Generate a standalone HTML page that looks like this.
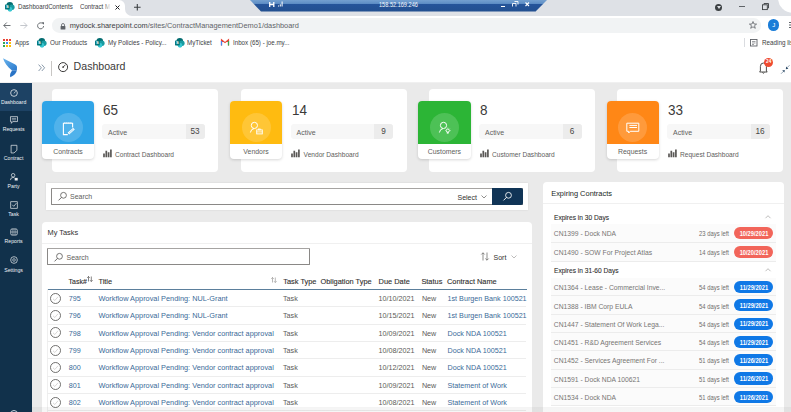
<!DOCTYPE html>
<html><head><meta charset="utf-8">
<style>
*{margin:0;padding:0;box-sizing:border-box}
html,body{width:791px;height:412px;overflow:hidden;background:#fff;font-family:"Liberation Sans",sans-serif;color:#323130}
.a{position:absolute}
.t{position:absolute;white-space:nowrap;line-height:1}
svg{position:absolute;overflow:visible}
</style></head><body>
<!-- tab strip -->
<div class="a" style="left:0;top:0;width:791px;height:15.6px;background:#dee1e6"></div>
<div class="a" style="left:0;top:0;width:125px;height:15.6px;background:#fff;border-top-right-radius:6px"></div>
<div class="a" style="left:125px;top:8px;width:8px;height:8px;background:#fff"></div>
<div class="a" style="left:125px;top:0;width:10px;height:15.6px;background:#dee1e6;border-bottom-left-radius:7px"></div>
<svg style="left:5px;top:1.5px" width="10" height="10"><circle cx="4.8" cy="3.3" r="3.3" fill="#036c70"/><circle cx="6.8" cy="5.3" r="2.8" fill="#1a9ba1"/><circle cx="5" cy="7.3" r="2.4" fill="#37c6d0"/><rect x="0" y="2.6" width="4.8" height="4.8" rx="0.6" fill="#03787c"/><text x="2.4" y="6.4" font-size="4" fill="#fff" text-anchor="middle" font-family="Liberation Sans" font-weight="bold">S</text></svg>
<div class="t" style="left:18px;top:2.8px;font-size:7px;color:#3c4043;transform:scaleX(0.88);transform-origin:0 0">DashboardContents</div><div class="t" style="left:79.6px;top:2.8px;font-size:7px;color:#3c4043;transform:scaleX(0.88);transform-origin:0 0">Contract M</div>
<div class="a" style="left:103px;top:1px;width:9px;height:11px;background:linear-gradient(90deg,rgba(255,255,255,0),#fff 90%)"></div>
<svg style="left:115px;top:5px" width="5" height="5"><path d="M0.5,0.5 L4.5,4.5 M4.5,0.5 L0.5,4.5" stroke="#202124" stroke-width="1"/></svg>
<svg style="left:133.5px;top:4px" width="7" height="7"><path d="M3.3,0 V6.6 M0,3.3 H6.6" stroke="#3c4043" stroke-width="1.1"/></svg>
<!-- remote desktop bar -->
<svg style="left:0;top:0" width="791" height="16"><defs><linearGradient id="rg" x1="0" y1="0" x2="0" y2="1"><stop offset="0" stop-color="#74a0d0"/><stop offset="0.3" stop-color="#5f8fc6"/><stop offset="0.36" stop-color="#25549a"/><stop offset="1" stop-color="#225090"/></linearGradient></defs>
<polygon points="250,0 547,0 535.6,11.6 261,11.6" fill="url(#rg)"/></svg>
<svg style="left:268.5px;top:2px" width="6" height="6"><path d="M0.7,0 V5 M4.8,0 V5 M0.7,2.5 H4.8" stroke="#fff" stroke-width="1.3"/></svg>
<svg style="left:278px;top:1px" width="6" height="6"><path d="M0.5,5.5 V4.5 M2.3,5.5 V3.3 M4.1,5.5 V0.5" stroke="#fff" stroke-width="1"/></svg>
<div class="t" style="left:378.7px;top:1.8px;font-size:6.5px;color:#f4f7fc;transform:scaleX(0.86);transform-origin:0 0">158.52.169.246</div>
<div class="a" style="left:500.5px;top:6px;width:4px;height:1px;background:#fff"></div>
<svg style="left:511.5px;top:1px" width="7" height="6"><path d="M2.5,0.5 H6 V3.5 M0.5,2.5 H4 V5.5 M0.5,2.5 V5.5" fill="none" stroke="#fff" stroke-width="0.9"/></svg>
<svg style="left:524.5px;top:2.2px" width="5" height="5"><path d="M0.5,0.5 L4,4 M4,0.5 L0.5,4" stroke="#fff" stroke-width="1.1"/></svg>
<!-- window controls -->
<div class="a" style="left:715px;top:3.5px;width:7px;height:7px;border-radius:50%;background:#3c4043"></div>
<svg style="left:716.5px;top:5.5px" width="4" height="4"><path d="M0,0 H4 L2,3 Z" fill="#dee1e6"/></svg>
<div class="a" style="left:739px;top:5.5px;width:6px;height:0.8px;background:#5f6368"></div>
<svg style="left:762px;top:3px" width="8" height="7"><path d="M2,1.5 V0.5 H6.5 V5 H5.5" fill="none" stroke="#3c4043" stroke-width="0.9"/><rect x="0.5" y="1.8" width="4.8" height="4.8" fill="none" stroke="#3c4043" stroke-width="0.9"/></svg>
<div class="a" style="left:777.5px;top:-17px;width:30px;height:30px;border-radius:50%;background:#fff"></div>
<!-- toolbar -->
<div class="a" style="left:52px;top:18.2px;width:709.4px;height:14.6px;border-radius:7.3px;background:#f1f3f4"></div>
<svg style="left:3px;top:22px" width="8" height="7"><path d="M7.5,3.5 H0.8 M3.8,0.5 L0.8,3.5 L3.8,6.5" fill="none" stroke="#5f6368" stroke-width="0.9"/></svg>
<svg style="left:20px;top:22px" width="8" height="7"><path d="M0.3,3.5 H7 M4,0.5 L7,3.5 L4,6.5" fill="none" stroke="#bdc1c6" stroke-width="0.9"/></svg>
<svg style="left:37px;top:22px" width="8" height="8"><path d="M6.6,4 A3,3 0 1 1 5.6,1.6" fill="none" stroke="#5f6368" stroke-width="0.9"/><path d="M4.5,0.2 H7 V2.7 Z" fill="#5f6368"/></svg>
<svg style="left:59.5px;top:22.5px" width="6" height="7"><path d="M1.5,3 V2 Q1.5,0.5 3,0.5 Q4.5,0.5 4.5,2 V3" fill="none" stroke="#5f6368" stroke-width="0.8"/><rect x="0.6" y="3" width="4.8" height="3.4" rx="0.5" fill="#5f6368"/></svg>
<div class="t" style="left:69.7px;top:21.8px;font-size:7.4px;color:#3c4043">mydock.sharepoint.com<span style="color:#5f6368">/sites/ContractManagementDemo1/dashboard</span></div>
<svg style="left:748.5px;top:21px" width="8" height="8"><path d="M4,0.5 L5,3 L7.6,3.1 L5.5,4.7 L6.3,7.3 L4,5.8 L1.7,7.3 L2.5,4.7 L0.4,3.1 L3,3 Z" fill="none" stroke="#5f6368" stroke-width="0.8"/></svg>
<div class="a" style="left:768px;top:19.2px;width:11.4px;height:11.4px;border-radius:50%;background:#1a7dd8"></div>
<div class="t" style="left:772.2px;top:22px;font-size:6px;color:#fff">J</div>
<div class="a" style="left:789px;top:21.5px;width:1.6px;height:1.6px;background:#5f6368;box-shadow:0 2.5px 0 #5f6368,0 5px 0 #5f6368"></div>
<!-- bookmarks -->
<svg style="left:3px;top:38.5px" width="8" height="8">
<rect x="0" y="0" width="2" height="2" fill="#ea4335"/><rect x="3" y="0" width="2" height="2" fill="#ea4335"/><rect x="6" y="0" width="2" height="2" fill="#ea4335"/>
<rect x="0" y="3" width="2" height="2" fill="#34a853"/><rect x="3" y="3" width="2" height="2" fill="#4285f4"/><rect x="6" y="3" width="2" height="2" fill="#fbbc05"/>
<rect x="0" y="6" width="2" height="2" fill="#34a853"/><rect x="3" y="6" width="2" height="2" fill="#fbbc05"/><rect x="6" y="6" width="2" height="2" fill="#fbbc05"/></svg>
<div class="t" style="left:15px;top:39.4px;font-size:7px;color:#3c4043;transform:scaleX(0.886);transform-origin:0 0">Apps</div>
<svg style="left:37px;top:37.5px" width="10" height="10"><circle cx="4.8" cy="3.3" r="3.3" fill="#036c70"/><circle cx="6.8" cy="5.3" r="2.8" fill="#1a9ba1"/><circle cx="5" cy="7.3" r="2.4" fill="#37c6d0"/><rect x="0" y="2.6" width="4.8" height="4.8" rx="0.6" fill="#03787c"/><text x="2.4" y="6.4" font-size="4" fill="#fff" text-anchor="middle" font-family="Liberation Sans" font-weight="bold">S</text></svg>
<div class="t" style="left:50px;top:39.4px;font-size:7px;color:#3c4043;transform:scaleX(0.900);transform-origin:0 0">Our Products</div>
<svg style="left:95px;top:37.5px" width="10" height="10"><circle cx="4.8" cy="3.3" r="3.3" fill="#036c70"/><circle cx="6.8" cy="5.3" r="2.8" fill="#1a9ba1"/><circle cx="5" cy="7.3" r="2.4" fill="#37c6d0"/><rect x="0" y="2.6" width="4.8" height="4.8" rx="0.6" fill="#03787c"/><text x="2.4" y="6.4" font-size="4" fill="#fff" text-anchor="middle" font-family="Liberation Sans" font-weight="bold">S</text></svg>
<div class="t" style="left:108px;top:39.4px;font-size:7px;color:#3c4043;transform:scaleX(0.893);transform-origin:0 0">My Policies - Policy...</div>
<svg style="left:175px;top:37.5px" width="10" height="10"><circle cx="4.8" cy="3.3" r="3.3" fill="#036c70"/><circle cx="6.8" cy="5.3" r="2.8" fill="#1a9ba1"/><circle cx="5" cy="7.3" r="2.4" fill="#37c6d0"/><rect x="0" y="2.6" width="4.8" height="4.8" rx="0.6" fill="#03787c"/><text x="2.4" y="6.4" font-size="4" fill="#fff" text-anchor="middle" font-family="Liberation Sans" font-weight="bold">S</text></svg>
<div class="t" style="left:187px;top:39.4px;font-size:7px;color:#3c4043;transform:scaleX(0.893);transform-origin:0 0">MyTicket</div>
<svg style="left:220.5px;top:39px" width="8" height="7"><path d="M0.5,6.5 V0.8 L4,3.6 L7.5,0.8 V6.5" fill="none" stroke="#ea4335" stroke-width="1.2"/><path d="M0.5,6.5 V2" stroke="#4285f4" stroke-width="1.2"/><path d="M7.5,6.5 V2" stroke="#34a853" stroke-width="1.2"/></svg>
<div class="t" style="left:232.8px;top:39.4px;font-size:7px;color:#3c4043;transform:scaleX(0.886);transform-origin:0 0">Inbox (65) - joe.my...</div>
<div class="a" style="left:743.5px;top:38px;width:0.8px;height:9px;background:#dadce0"></div>
<svg style="left:750px;top:39px" width="8" height="8"><rect x="0.5" y="0.5" width="6.5" height="6.5" fill="none" stroke="#5f6368" stroke-width="0.9"/><path d="M2,2.5 H5.5 M2,4 H5.5 M2,5.5 H4" stroke="#5f6368" stroke-width="0.6"/></svg>
<div class="t" style="left:762px;top:39.4px;font-size:7px;color:#3c4043;transform:scaleX(0.900);transform-origin:0 0">Reading list</div>

<!-- app header -->
<svg style="left:0;top:0" width="20" height="80"><defs><linearGradient id="lg1" x1="0" y1="0" x2="1" y2="1"><stop offset="0" stop-color="#6ab4ec"/><stop offset="1" stop-color="#2a78cc"/></linearGradient></defs>
<path d="M3,58.2 C4.5,62.5 7,66.5 12,70.6 L16.9,70.2 L17,66.8 Q16.6,65 14.8,64.2 Z" fill="url(#lg1)"/>
<path d="M12,70.6 L16.9,70.2 Q16.2,74.5 10.3,77.2 Q9.3,74.5 12,70.6 Z" fill="#2a74c6"/></svg>
<svg style="left:38px;top:64px" width="8" height="8"><path d="M0.6,0.6 L3.4,3.8 L0.6,7 M3.8,0.6 L6.6,3.8 L3.8,7" fill="none" stroke="#6b7f94" stroke-width="0.8"/></svg>
<div class="a" style="left:51.2px;top:61px;width:0.9px;height:14.5px;background:#c8c6c4"></div>
<svg style="left:58px;top:61.8px" width="11" height="11"><circle cx="5.1" cy="5.1" r="4.5" fill="none" stroke="#3b3a39" stroke-width="1"/><path d="M5.1,5.1 L7.6,2.6" stroke="#3b3a39" stroke-width="0.9"/><circle cx="5.1" cy="5.1" r="0.9" fill="#3b3a39"/></svg>
<div class="t" style="left:73.6px;top:61.2px;font-size:10.6px;color:#3b3a39">Dashboard</div>
<svg style="left:759px;top:62px" width="10" height="12"><path d="M0.6,10 L1.4,9 L1.4,4.5 Q1.4,1 4.4,1 Q7.4,1 7.4,4.5 L7.4,9 L8.2,10 Z" fill="none" stroke="#3b3a39" stroke-width="0.9"/><path d="M3.4,10.5 Q4.4,12 5.4,10.5" stroke="#3b3a39" stroke-width="0.9" fill="none"/></svg>
<div class="a" style="left:764.4px;top:57.9px;width:9px;height:9px;border-radius:50%;background:#ef4b30"></div>
<div class="t" style="left:766.1px;top:60.3px;font-size:4.6px;color:#fff;font-weight:bold">24</div>
<svg style="left:781px;top:65px" width="9" height="9"><path d="M8.6,0.2 L6.3,2.5 M0,8.8 L2.3,6.5" stroke="#6a8299" stroke-width="0.7" fill="none"/><path d="M4.8,4.2 L5.2,1.6 L7.4,3.8 Z M3.8,5 L1.2,5.4 L3.4,7.6 Z" fill="#2d4a66"/></svg>
<div class="a" style="left:0;top:83px;width:32px;height:329px;background:#11314b"></div>
<div class="a" style="left:0;top:83px;width:32px;height:28px;background:#1d4264"></div>
<div class="a" style="left:32px;top:83px;width:759px;height:329px;background:#eaeaea"></div>
<div class="a" style="left:0;top:82px;width:791px;height:1px;background:rgba(0,0,0,0.06)"></div>
<svg style="left:13.5px;top:92.5px" width="1" height="1" opacity="0.92"><g transform="scale(0.88)"><circle cx="0" cy="0" r="3.8" fill="none" stroke="#fff" stroke-width="0.9"/><path d="M0,0.5 L1.8,-2" stroke="#fff" stroke-width="0.8"/></g></svg><div class="t" style="left:13.6px;top:99.6px;font-size:5.2px;color:#eef2f6;transform:translateX(-50%)">Dashboard</div><svg style="left:13.5px;top:120.3px" width="1" height="1" opacity="0.92"><g transform="scale(0.88)"><path d="M-4,-3.8 H4 V1.8 H-1.5 L-3,3.8 V1.8 H-4 Z" fill="none" stroke="#fff" stroke-width="0.8"/><path d="M-2.5,-1.8 H2.5 M-2.5,-0.2 H2.5" stroke="#fff" stroke-width="0.6"/></g></svg><div class="t" style="left:13.6px;top:127.39999999999999px;font-size:5.2px;color:#eef2f6;transform:translateX(-50%)">Requests</div><svg style="left:13.5px;top:148.7px" width="1" height="1" opacity="0.92"><g transform="scale(0.88)"><path d="M-3.3,-4.2 H3.3 V1.5 L0,4.5 H-3.3 Z" fill="none" stroke="#fff" stroke-width="0.8"/></g></svg><div class="t" style="left:13.6px;top:155.79999999999998px;font-size:5.2px;color:#eef2f6;transform:translateX(-50%)">Contract</div><svg style="left:13.5px;top:176.6px" width="1" height="1" opacity="0.92"><g transform="scale(0.88)"><circle cx="-1" cy="-2" r="2" fill="none" stroke="#fff" stroke-width="0.8"/><path d="M-4,3.5 Q-4,0.5 -1,0.5 Q0.5,0.5 1,1.5" fill="none" stroke="#fff" stroke-width="0.8"/><rect x="0.8" y="1" width="3.4" height="3" fill="#fff"/></g></svg><div class="t" style="left:13.6px;top:183.7px;font-size:5.2px;color:#eef2f6;transform:translateX(-50%)">Party</div><svg style="left:13.5px;top:204.6px" width="1" height="1" opacity="0.92"><g transform="scale(0.88)"><rect x="-3.7" y="-3.7" width="7.4" height="7.4" fill="none" stroke="#fff" stroke-width="0.8"/><path d="M-2,-0.3 L-0.3,1.5 L2.8,-2.2" fill="none" stroke="#fff" stroke-width="0.8"/></g></svg><div class="t" style="left:13.6px;top:211.7px;font-size:5.2px;color:#eef2f6;transform:translateX(-50%)">Task</div><svg style="left:13.5px;top:232.3px" width="1" height="1" opacity="0.92"><g transform="scale(0.88)"><rect x="-3.7" y="-3.5" width="7.4" height="7" rx="1.5" fill="none" stroke="#fff" stroke-width="0.8"/><path d="M-1.2,-3.5 V3.5 M1.2,-3.5 V3.5 M-3.7,0 H3.7" stroke="#fff" stroke-width="0.6"/></g></svg><div class="t" style="left:13.6px;top:239.4px;font-size:5.2px;color:#eef2f6;transform:translateX(-50%)">Reports</div><svg style="left:13.5px;top:260.4px" width="1" height="1" opacity="0.92"><g transform="scale(0.88)"><circle cx="0" cy="0" r="3.8" fill="none" stroke="#fff" stroke-width="0.8"/><circle cx="0" cy="0" r="1.5" fill="none" stroke="#fff" stroke-width="0.7"/></g></svg><div class="t" style="left:13.6px;top:267.5px;font-size:5.2px;color:#eef2f6;transform:translateX(-50%)">Settings</div><div class="a" style="left:9.5px;top:409.5px;width:8px;height:8px;border-radius:50%;border:0.8px solid #c9d3de"></div><div class="a" style="left:52px;top:88.7px;width:166.4px;height:83px;background:#fff;border-radius:4px"></div>
<div class="a" style="left:42px;top:100.6px;width:52.3px;height:58.3px;background:#fff;border-radius:4px;box-shadow:0 1px 3px rgba(0,0,0,0.16);overflow:hidden">
 <div class="a" style="left:0;top:0;width:52.3px;height:43.2px;background:#2fa4e7"></div>
 <div class="a" style="left:11.6px;top:12.6px;width:29px;height:29px;border-radius:50%;background:rgba(255,255,255,0.16)"></div>
 <div class="t" style="left:26px;top:48.8px;font-size:6.9px;color:#605e5c;transform:translateX(-50%)">Contracts</div>
</div>
<svg style="left:68.2px;top:127.6px" width="1" height="1"><path d="M4.6,-0.6 V-4.8 H-4.6 V6.6 H-0.2" fill="none" stroke="#fff" stroke-width="1.1"/><path d="M-3.1,-6 V-4.5 M-1.1,-6 V-4.5 M0.9,-6 V-4.5 M2.9,-6 V-4.5" stroke="#fff" stroke-width="0.8"/><path d="M0.4,5.6 L6,0.6" stroke="#fff" stroke-width="2.3"/><path d="M1.2,5 L5.4,1.2" stroke="#5ab5ea" stroke-width="0.6"/></svg>
<div class="t" style="left:103px;top:102.2px;font-size:15px;color:#3b3a39;transform:scaleX(0.9);transform-origin:0 0">65</div>
<div class="a" style="left:102px;top:124px;width:102.5px;height:15px;background:#f7f7f7;border-radius:3px"></div>
<div class="a" style="left:185.5px;top:124px;width:19px;height:15px;background:#ececec;border-radius:0 3px 3px 0"></div>
<div class="t" style="left:108px;top:128.6px;font-size:7px;color:#605e5c">Active</div>
<div class="t" style="left:195px;top:128.1px;font-size:8.2px;color:#484644;transform:translateX(-50%)">53</div>
<svg style="left:102.8px;top:149px" width="10" height="9"><path d="M1,8.3 V4.5 M3.3,8.3 V1.8 M5.6,8.3 V3.2 M7.9,8.3 V0.5" stroke="#5a5856" stroke-width="1.7"/></svg>
<div class="t" style="left:115px;top:151.6px;font-size:6.6px;color:#605e5c">Contract Dashboard</div>
<div class="a" style="left:240.6px;top:88.7px;width:166.4px;height:83px;background:#fff;border-radius:4px"></div>
<div class="a" style="left:230px;top:100.6px;width:52.3px;height:58.3px;background:#fff;border-radius:4px;box-shadow:0 1px 3px rgba(0,0,0,0.16);overflow:hidden">
 <div class="a" style="left:0;top:0;width:52.3px;height:43.2px;background:#ffbb10"></div>
 <div class="a" style="left:11.6px;top:12.6px;width:29px;height:29px;border-radius:50%;background:rgba(255,255,255,0.16)"></div>
 <div class="t" style="left:26px;top:48.8px;font-size:6.9px;color:#605e5c;transform:translateX(-50%)">Vendors</div>
</div>
<svg style="left:256.2px;top:127.6px" width="1" height="1"><circle cx="-1.6" cy="-2.6" r="3.1" fill="none" stroke="#fff" stroke-width="1"/><path d="M-5.6,4.5 Q-5,0.9 -2,0.6" fill="none" stroke="#fff" stroke-width="1"/><rect x="0.7" y="1.9" width="5.6" height="4" fill="none" stroke="#fff" stroke-width="0.9"/><path d="M0.7,3.9 H6.3" stroke="#fff" stroke-width="0.8"/><rect x="2.6" y="0.9" width="1.8" height="1" fill="none" stroke="#fff" stroke-width="0.6"/></svg>
<div class="t" style="left:291.6px;top:102.2px;font-size:15px;color:#3b3a39;transform:scaleX(0.9);transform-origin:0 0">14</div>
<div class="a" style="left:290.6px;top:124px;width:102.5px;height:15px;background:#f7f7f7;border-radius:3px"></div>
<div class="a" style="left:374.1px;top:124px;width:19px;height:15px;background:#ececec;border-radius:0 3px 3px 0"></div>
<div class="t" style="left:296.6px;top:128.6px;font-size:7px;color:#605e5c">Active</div>
<div class="t" style="left:383.6px;top:128.1px;font-size:8.2px;color:#484644;transform:translateX(-50%)">9</div>
<svg style="left:291.4px;top:149px" width="10" height="9"><path d="M1,8.3 V4.5 M3.3,8.3 V1.8 M5.6,8.3 V3.2 M7.9,8.3 V0.5" stroke="#5a5856" stroke-width="1.7"/></svg>
<div class="t" style="left:303.6px;top:151.6px;font-size:6.6px;color:#605e5c">Vendor Dashboard</div>
<div class="a" style="left:429px;top:88.7px;width:166.4px;height:83px;background:#fff;border-radius:4px"></div>
<div class="a" style="left:418.4px;top:100.6px;width:52.3px;height:58.3px;background:#fff;border-radius:4px;box-shadow:0 1px 3px rgba(0,0,0,0.16);overflow:hidden">
 <div class="a" style="left:0;top:0;width:52.3px;height:43.2px;background:#2cb536"></div>
 <div class="a" style="left:11.6px;top:12.6px;width:29px;height:29px;border-radius:50%;background:rgba(255,255,255,0.16)"></div>
 <div class="t" style="left:26px;top:48.8px;font-size:6.9px;color:#605e5c;transform:translateX(-50%)">Customers</div>
</div>
<svg style="left:444.59999999999997px;top:127.6px" width="1" height="1"><circle cx="-1.5" cy="-2.6" r="3.1" fill="none" stroke="#fff" stroke-width="1"/><path d="M-5.6,4.5 Q-5,0.9 -2,0.6" fill="none" stroke="#fff" stroke-width="1"/><circle cx="2.8" cy="2.6" r="1.6" fill="none" stroke="#fff" stroke-width="0.9"/><rect x="2.1" y="4.2" width="1.4" height="1.4" fill="none" stroke="#fff" stroke-width="0.6"/><path d="M2.8,-0.4 V0.4 M0,2.6 H0.6 M5,2.6 H5.7 M0.9,0.7 L1.4,1.2 M4.7,0.7 L4.2,1.2" stroke="#fff" stroke-width="0.6"/></svg>
<div class="t" style="left:480px;top:102.2px;font-size:15px;color:#3b3a39;transform:scaleX(0.9);transform-origin:0 0">8</div>
<div class="a" style="left:479px;top:124px;width:102.5px;height:15px;background:#f7f7f7;border-radius:3px"></div>
<div class="a" style="left:562.5px;top:124px;width:19px;height:15px;background:#ececec;border-radius:0 3px 3px 0"></div>
<div class="t" style="left:485px;top:128.6px;font-size:7px;color:#605e5c">Active</div>
<div class="t" style="left:572px;top:128.1px;font-size:8.2px;color:#484644;transform:translateX(-50%)">6</div>
<svg style="left:479.8px;top:149px" width="10" height="9"><path d="M1,8.3 V4.5 M3.3,8.3 V1.8 M5.6,8.3 V3.2 M7.9,8.3 V0.5" stroke="#5a5856" stroke-width="1.7"/></svg>
<div class="t" style="left:492px;top:151.6px;font-size:6.6px;color:#605e5c">Customer Dashboard</div>
<div class="a" style="left:617px;top:88.7px;width:166.4px;height:83px;background:#fff;border-radius:4px"></div>
<div class="a" style="left:606.6px;top:100.6px;width:52.3px;height:58.3px;background:#fff;border-radius:4px;box-shadow:0 1px 3px rgba(0,0,0,0.16);overflow:hidden">
 <div class="a" style="left:0;top:0;width:52.3px;height:43.2px;background:#ff8716"></div>
 <div class="a" style="left:11.6px;top:12.6px;width:29px;height:29px;border-radius:50%;background:rgba(255,255,255,0.16)"></div>
 <div class="t" style="left:26px;top:48.8px;font-size:6.9px;color:#605e5c;transform:translateX(-50%)">Requests</div>
</div>
<svg style="left:632.8000000000001px;top:127.6px" width="1" height="1"><path d="M-6.2,-4.8 H5.8 V3.3 H-2.8 L-4.3,5 V3.3 H-6.2 Z" fill="none" stroke="#fff" stroke-width="1"/><path d="M-3.6,-2.6 H4 M-3.6,-0.5 H4" stroke="#fff" stroke-width="1"/></svg>
<div class="t" style="left:668px;top:102.2px;font-size:15px;color:#3b3a39;transform:scaleX(0.9);transform-origin:0 0">33</div>
<div class="a" style="left:667px;top:124px;width:102.5px;height:15px;background:#f7f7f7;border-radius:3px"></div>
<div class="a" style="left:750.5px;top:124px;width:19px;height:15px;background:#ececec;border-radius:0 3px 3px 0"></div>
<div class="t" style="left:673px;top:128.6px;font-size:7px;color:#605e5c">Active</div>
<div class="t" style="left:760px;top:128.1px;font-size:8.2px;color:#484644;transform:translateX(-50%)">16</div>
<svg style="left:667.8px;top:149px" width="10" height="9"><path d="M1,8.3 V4.5 M3.3,8.3 V1.8 M5.6,8.3 V3.2 M7.9,8.3 V0.5" stroke="#5a5856" stroke-width="1.7"/></svg>
<div class="t" style="left:680px;top:151.6px;font-size:6.6px;color:#605e5c">Request Dashboard</div>
<div class="a" style="left:46px;top:182.7px;width:481.5px;height:27px;background:#fff;box-shadow:0 0 2px rgba(0,0,0,0.1)"></div>
<div class="a" style="left:50.9px;top:188.1px;width:471.7px;height:16.7px;border:1px solid #8a8886;border-top-color:#a6a4a2;border-radius:1px;background:#fff"></div>
<svg style="left:58px;top:192px" width="9" height="9"><circle cx="5.5" cy="3.3" r="2.9" fill="none" stroke="#605e5c" stroke-width="0.85"/><path d="M3.5,5.4 L0.5,8.4" stroke="#605e5c" stroke-width="0.9"/></svg>
<div class="t" style="left:70px;top:193px;font-size:7px;color:#605e5c">Search</div>
<div class="t" style="left:457.5px;top:193.6px;font-size:7px;color:#323130">Select</div>
<svg style="left:481px;top:194.5px" width="6" height="4"><path d="M0.5,0.5 L3,3 L5.5,0.5" fill="none" stroke="#605e5c" stroke-width="0.7"/></svg>
<div class="a" style="left:492px;top:188px;width:30.6px;height:16.8px;background:#103456;border-radius:0 2px 2px 0"></div>
<svg style="left:502.8px;top:191.5px" width="9" height="9"><circle cx="5.5" cy="3.3" r="2.9" fill="none" stroke="#fff" stroke-width="0.85"/><path d="M3.5,5.4 L0.5,8.4" stroke="#fff" stroke-width="0.9"/></svg>
<div class="a" style="left:42px;top:222.2px;width:490px;height:190px;background:#fff;border-radius:4px 4px 0 0"></div>
<div class="t" style="left:47.5px;top:229.4px;font-size:7.4px;color:#323130">My Tasks</div>
<div class="a" style="left:42px;top:243px;width:490px;height:1px;background:#f0f0f0"></div>
<div class="a" style="left:47px;top:248.4px;width:262.5px;height:17px;border:1px solid #8a8886;border-top-color:#a6a4a2;border-radius:1px"></div>
<svg style="left:53.5px;top:252.5px" width="9" height="9"><circle cx="5.5" cy="3.3" r="2.9" fill="none" stroke="#605e5c" stroke-width="0.85"/><path d="M3.5,5.4 L0.5,8.4" stroke="#605e5c" stroke-width="0.9"/></svg>
<div class="t" style="left:66.5px;top:253.5px;font-size:7px;color:#605e5c">Search</div>
<svg style="left:481px;top:252px" width="8" height="9"><path d="M2,8.5 V0.8 M0.3,2.5 L2,0.8 L3.7,2.5 M6,0.5 V8.2 M4.3,6.5 L6,8.2 L7.7,6.5" fill="none" stroke="#605e5c" stroke-width="0.7"/></svg>
<div class="t" style="left:493.5px;top:253.5px;font-size:7px;color:#323130">Sort</div>
<svg style="left:511px;top:255px" width="6" height="4"><path d="M0.5,0.5 L3,3 L5.5,0.5" fill="none" stroke="#a19f9d" stroke-width="0.7"/></svg>
<div class="t" style="left:68.5px;top:278.1px;font-size:7px;color:#323130;-webkit-text-stroke:0.12px #323130">Task#</div>
<svg style="left:87px;top:276px" width="6" height="6"><path d="M1.5,5.5 V0.5 M0.2,1.8 L1.5,0.5 L2.8,1.8 M4.3,0.5 V5.5 M3,4.2 L4.3,5.5 L5.6,4.2" fill="none" stroke="#323130" stroke-width="0.6"/></svg>
<div class="t" style="left:98.4px;top:277.8px;font-size:7.4px;color:#323130;-webkit-text-stroke:0.12px #323130">Title</div>
<svg style="left:270.5px;top:277px" width="6" height="6"><path d="M1.5,5.5 V0.5 M0.2,1.8 L1.5,0.5 L2.8,1.8 M4.3,0.5 V5.5 M3,4.2 L4.3,5.5 L5.6,4.2" fill="none" stroke="#8a8886" stroke-width="0.6"/></svg>
<div class="t" style="left:283.3px;top:277.8px;font-size:7.4px;color:#323130;-webkit-text-stroke:0.12px #323130">Task Type</div>
<div class="t" style="left:320.4px;top:277.8px;font-size:7.4px;color:#323130;-webkit-text-stroke:0.12px #323130">Obligation Type</div>
<div class="t" style="left:378.6px;top:277.8px;font-size:7.4px;color:#323130;-webkit-text-stroke:0.12px #323130">Due Date</div>
<div class="t" style="left:421.4px;top:277.8px;font-size:7.4px;color:#323130;-webkit-text-stroke:0.12px #323130">Status</div>
<div class="t" style="left:447px;top:277.8px;font-size:7.4px;color:#323130;-webkit-text-stroke:0.12px #323130">Contract Name</div>
<div class="a" style="left:47px;top:288.6px;width:480px;height:1.2px;background:#5b7f9c"></div>
<div class="a" style="left:47px;top:289px;width:0.8px;height:123px;background:#efefef"></div>
<svg style="left:50px;top:292.8px" width="11" height="11"><circle cx="5.5" cy="5.5" r="5" fill="none" stroke="#5a5856" stroke-width="0.85"/><path d="M3,5.8 L4.8,7.5 L8,3.8" fill="none" stroke="#c8c6c4" stroke-width="0.7"/></svg>
<div class="t" style="left:68.8px;top:295.1px;font-size:7.2px;color:#3a6a98">795</div>
<div class="t" style="left:98.4px;top:295.0px;font-size:7.35px;color:#3a6a98">Workflow Approval Pending: NUL-Grant</div>
<div class="t" style="left:283px;top:295.1px;font-size:7.2px;color:#5c5a58">Task</div>
<div class="t" style="left:378.5px;top:295.1px;font-size:7.2px;color:#5c5a58">10/10/2021</div>
<div class="t" style="left:421.9px;top:295.1px;font-size:7.2px;color:#5c5a58">New</div>
<div class="t" style="left:447.5px;top:295.1px;font-size:7.2px;color:#3a6a98">1st Burgen Bank 100521</div>
<div class="a" style="left:47px;top:306.2px;width:479px;height:0.8px;background:#ededed"></div>
<svg style="left:50px;top:310.13px" width="11" height="11"><circle cx="5.5" cy="5.5" r="5" fill="none" stroke="#5a5856" stroke-width="0.85"/><path d="M3,5.8 L4.8,7.5 L8,3.8" fill="none" stroke="#c8c6c4" stroke-width="0.7"/></svg>
<div class="t" style="left:68.8px;top:312.43px;font-size:7.2px;color:#3a6a98">796</div>
<div class="t" style="left:98.4px;top:312.33px;font-size:7.35px;color:#3a6a98">Workflow Approval Pending: NUL-Grant</div>
<div class="t" style="left:283px;top:312.43px;font-size:7.2px;color:#5c5a58">Task</div>
<div class="t" style="left:378.5px;top:312.43px;font-size:7.2px;color:#5c5a58">10/15/2021</div>
<div class="t" style="left:421.9px;top:312.43px;font-size:7.2px;color:#5c5a58">New</div>
<div class="t" style="left:447.5px;top:312.43px;font-size:7.2px;color:#3a6a98">1st Burgen Bank 100521</div>
<div class="a" style="left:47px;top:323.53px;width:479px;height:0.8px;background:#ededed"></div>
<svg style="left:50px;top:327.46000000000004px" width="11" height="11"><circle cx="5.5" cy="5.5" r="5" fill="none" stroke="#5a5856" stroke-width="0.85"/><path d="M3,5.8 L4.8,7.5 L8,3.8" fill="none" stroke="#c8c6c4" stroke-width="0.7"/></svg>
<div class="t" style="left:68.8px;top:329.76000000000005px;font-size:7.2px;color:#3a6a98">798</div>
<div class="t" style="left:98.4px;top:329.66px;font-size:7.35px;color:#3a6a98">Workflow Approval Pending: Vendor contract approval</div>
<div class="t" style="left:283px;top:329.76000000000005px;font-size:7.2px;color:#5c5a58">Task</div>
<div class="t" style="left:378.5px;top:329.76000000000005px;font-size:7.2px;color:#5c5a58">10/09/2021</div>
<div class="t" style="left:421.9px;top:329.76000000000005px;font-size:7.2px;color:#5c5a58">New</div>
<div class="t" style="left:447.5px;top:329.76000000000005px;font-size:7.2px;color:#3a6a98">Dock NDA 100521</div>
<div class="a" style="left:47px;top:340.86px;width:479px;height:0.8px;background:#ededed"></div>
<svg style="left:50px;top:344.79px" width="11" height="11"><circle cx="5.5" cy="5.5" r="5" fill="none" stroke="#5a5856" stroke-width="0.85"/><path d="M3,5.8 L4.8,7.5 L8,3.8" fill="none" stroke="#c8c6c4" stroke-width="0.7"/></svg>
<div class="t" style="left:68.8px;top:347.09000000000003px;font-size:7.2px;color:#3a6a98">799</div>
<div class="t" style="left:98.4px;top:346.99px;font-size:7.35px;color:#3a6a98">Workflow Approval Pending: Vendor contract approval</div>
<div class="t" style="left:283px;top:347.09000000000003px;font-size:7.2px;color:#5c5a58">Task</div>
<div class="t" style="left:378.5px;top:347.09000000000003px;font-size:7.2px;color:#5c5a58">10/08/2021</div>
<div class="t" style="left:421.9px;top:347.09000000000003px;font-size:7.2px;color:#5c5a58">New</div>
<div class="t" style="left:447.5px;top:347.09000000000003px;font-size:7.2px;color:#3a6a98">Dock NDA 100521</div>
<div class="a" style="left:47px;top:358.19px;width:479px;height:0.8px;background:#ededed"></div>
<svg style="left:50px;top:362.12px" width="11" height="11"><circle cx="5.5" cy="5.5" r="5" fill="none" stroke="#5a5856" stroke-width="0.85"/><path d="M3,5.8 L4.8,7.5 L8,3.8" fill="none" stroke="#c8c6c4" stroke-width="0.7"/></svg>
<div class="t" style="left:68.8px;top:364.42px;font-size:7.2px;color:#3a6a98">800</div>
<div class="t" style="left:98.4px;top:364.32px;font-size:7.35px;color:#3a6a98">Workflow Approval Pending: Vendor contract approval</div>
<div class="t" style="left:283px;top:364.42px;font-size:7.2px;color:#5c5a58">Task</div>
<div class="t" style="left:378.5px;top:364.42px;font-size:7.2px;color:#5c5a58">10/12/2021</div>
<div class="t" style="left:421.9px;top:364.42px;font-size:7.2px;color:#5c5a58">New</div>
<div class="t" style="left:447.5px;top:364.42px;font-size:7.2px;color:#3a6a98">Dock NDA 100521</div>
<div class="a" style="left:47px;top:375.52px;width:479px;height:0.8px;background:#ededed"></div>
<svg style="left:50px;top:379.45px" width="11" height="11"><circle cx="5.5" cy="5.5" r="5" fill="none" stroke="#5a5856" stroke-width="0.85"/><path d="M3,5.8 L4.8,7.5 L8,3.8" fill="none" stroke="#c8c6c4" stroke-width="0.7"/></svg>
<div class="t" style="left:68.8px;top:381.75px;font-size:7.2px;color:#3a6a98">801</div>
<div class="t" style="left:98.4px;top:381.65px;font-size:7.35px;color:#3a6a98">Workflow Approval Pending: Vendor contract approval</div>
<div class="t" style="left:283px;top:381.75px;font-size:7.2px;color:#5c5a58">Task</div>
<div class="t" style="left:378.5px;top:381.75px;font-size:7.2px;color:#5c5a58">10/09/2021</div>
<div class="t" style="left:421.9px;top:381.75px;font-size:7.2px;color:#5c5a58">New</div>
<div class="t" style="left:447.5px;top:381.75px;font-size:7.2px;color:#3a6a98">Statement of Work</div>
<div class="a" style="left:47px;top:392.84999999999997px;width:479px;height:0.8px;background:#ededed"></div>
<svg style="left:50px;top:396.78px" width="11" height="11"><circle cx="5.5" cy="5.5" r="5" fill="none" stroke="#5a5856" stroke-width="0.85"/><path d="M3,5.8 L4.8,7.5 L8,3.8" fill="none" stroke="#c8c6c4" stroke-width="0.7"/></svg>
<div class="t" style="left:68.8px;top:399.08px;font-size:7.2px;color:#3a6a98">802</div>
<div class="t" style="left:98.4px;top:398.97999999999996px;font-size:7.35px;color:#3a6a98">Workflow Approval Pending: Vendor contract approval</div>
<div class="t" style="left:283px;top:399.08px;font-size:7.2px;color:#5c5a58">Task</div>
<div class="t" style="left:378.5px;top:399.08px;font-size:7.2px;color:#5c5a58">10/08/2021</div>
<div class="t" style="left:421.9px;top:399.08px;font-size:7.2px;color:#5c5a58">New</div>
<div class="t" style="left:447.5px;top:399.08px;font-size:7.2px;color:#3a6a98">Statement of Work</div>
<div class="a" style="left:47px;top:410.17999999999995px;width:479px;height:0.8px;background:#ededed"></div>
<div class="a" style="left:543px;top:182.1px;width:240.5px;height:230px;background:#fff;border-radius:4px 4px 0 0"></div>
<div class="t" style="left:551.2px;top:189.6px;font-size:7.45px;color:#201f1e">Expiring Contracts</div>
<div class="a" style="left:543px;top:203.3px;width:240.5px;height:0.8px;background:#f0f0f0"></div>
<div class="t" style="left:553.8px;top:214.9px;font-size:7.1px;color:#323130;-webkit-text-stroke:0.1px #323130;transform:scaleX(0.93);transform-origin:0 0">Expires in 30 Days</div>
<svg style="left:765px;top:214.9px" width="6" height="4"><path d="M0.5,3.2 L3,0.7 L5.5,3.2" fill="none" stroke="#a19f9d" stroke-width="0.7"/></svg>
<div class="a" style="left:550.5px;top:224.20000000000002px;width:225.5px;height:18.4px;background:#fbfbfb;border-bottom:0.8px solid #ececec"></div>
<div class="t" style="left:553.8px;top:231.4px;font-size:6.75px;color:#777573">CN1399 - Dock NDA</div>
<div class="t" style="left:728.5px;top:231.4px;font-size:6.5px;color:#6f6d6b;transform:translateX(-100%) scaleX(0.9);transform-origin:100% 0">23 days left</div>
<div class="a" style="left:734.3px;top:227.1px;width:38.6px;height:12.3px;border-radius:6.2px;background:#f2655a"></div>
<div class="t" style="left:753.6px;top:230.9px;font-size:6.6px;color:#fff;font-weight:bold;transform:translateX(-50%) scaleX(0.87)">10/29/2021</div>
<div class="a" style="left:550.5px;top:243.20000000000002px;width:225.5px;height:18.4px;background:#fbfbfb;border-bottom:0.8px solid #ececec"></div>
<div class="t" style="left:553.8px;top:250.4px;font-size:6.75px;color:#777573">CN1490 - SOW For Project Atlas</div>
<div class="t" style="left:728.5px;top:250.4px;font-size:6.5px;color:#6f6d6b;transform:translateX(-100%) scaleX(0.9);transform-origin:100% 0">14 days left</div>
<div class="a" style="left:734.3px;top:246.1px;width:38.6px;height:12.3px;border-radius:6.2px;background:#f2655a"></div>
<div class="t" style="left:753.6px;top:249.9px;font-size:6.6px;color:#fff;font-weight:bold;transform:translateX(-50%) scaleX(0.87)">10/20/2021</div>
<div class="t" style="left:553.8px;top:268.0px;font-size:7.1px;color:#323130;-webkit-text-stroke:0.1px #323130;transform:scaleX(0.93);transform-origin:0 0">Expires in 31-60 Days</div>
<svg style="left:765px;top:268.0px" width="6" height="4"><path d="M0.5,3.2 L3,0.7 L5.5,3.2" fill="none" stroke="#a19f9d" stroke-width="0.7"/></svg>
<div class="a" style="left:550.5px;top:278.0px;width:225.5px;height:18.4px;background:#fbfbfb;border-bottom:0.8px solid #ececec"></div>
<div class="t" style="left:553.8px;top:285.2px;font-size:6.75px;color:#777573">CN1364 - Lease - Commercial Inve...</div>
<div class="t" style="left:728.5px;top:285.2px;font-size:6.5px;color:#6f6d6b;transform:translateX(-100%) scaleX(0.9);transform-origin:100% 0">54 days left</div>
<div class="a" style="left:734.3px;top:280.9px;width:38.6px;height:12.3px;border-radius:6.2px;background:#0f78e6"></div>
<div class="t" style="left:753.6px;top:284.7px;font-size:6.6px;color:#fff;font-weight:bold;transform:translateX(-50%) scaleX(0.87)">11/29/2021</div>
<div class="a" style="left:550.5px;top:296.3px;width:225.5px;height:18.4px;background:#fbfbfb;border-bottom:0.8px solid #ececec"></div>
<div class="t" style="left:553.8px;top:303.5px;font-size:6.75px;color:#777573">CN1388 - IBM Corp EULA</div>
<div class="t" style="left:728.5px;top:303.5px;font-size:6.5px;color:#6f6d6b;transform:translateX(-100%) scaleX(0.9);transform-origin:100% 0">54 days left</div>
<div class="a" style="left:734.3px;top:299.2px;width:38.6px;height:12.3px;border-radius:6.2px;background:#0f78e6"></div>
<div class="t" style="left:753.6px;top:303.0px;font-size:6.6px;color:#fff;font-weight:bold;transform:translateX(-50%) scaleX(0.87)">11/29/2021</div>
<div class="a" style="left:550.5px;top:314.6px;width:225.5px;height:18.4px;background:#fbfbfb;border-bottom:0.8px solid #ececec"></div>
<div class="t" style="left:553.8px;top:321.8px;font-size:6.75px;color:#777573">CN1447 - Statement Of Work Lega...</div>
<div class="t" style="left:728.5px;top:321.8px;font-size:6.5px;color:#6f6d6b;transform:translateX(-100%) scaleX(0.9);transform-origin:100% 0">54 days left</div>
<div class="a" style="left:734.3px;top:317.5px;width:38.6px;height:12.3px;border-radius:6.2px;background:#0f78e6"></div>
<div class="t" style="left:753.6px;top:321.3px;font-size:6.6px;color:#fff;font-weight:bold;transform:translateX(-50%) scaleX(0.87)">11/29/2021</div>
<div class="a" style="left:550.5px;top:332.90000000000003px;width:225.5px;height:18.4px;background:#fbfbfb;border-bottom:0.8px solid #ececec"></div>
<div class="t" style="left:553.8px;top:340.1px;font-size:6.75px;color:#777573">CN1451 - R&amp;D Agreement Services</div>
<div class="t" style="left:728.5px;top:340.1px;font-size:6.5px;color:#6f6d6b;transform:translateX(-100%) scaleX(0.9);transform-origin:100% 0">54 days left</div>
<div class="a" style="left:734.3px;top:335.8px;width:38.6px;height:12.3px;border-radius:6.2px;background:#0f78e6"></div>
<div class="t" style="left:753.6px;top:339.6px;font-size:6.6px;color:#fff;font-weight:bold;transform:translateX(-50%) scaleX(0.87)">11/29/2021</div>
<div class="a" style="left:550.5px;top:351.2px;width:225.5px;height:18.4px;background:#fbfbfb;border-bottom:0.8px solid #ececec"></div>
<div class="t" style="left:553.8px;top:358.4px;font-size:6.75px;color:#777573">CN1452 - Services Agreement For ...</div>
<div class="t" style="left:728.5px;top:358.4px;font-size:6.5px;color:#6f6d6b;transform:translateX(-100%) scaleX(0.9);transform-origin:100% 0">51 days left</div>
<div class="a" style="left:734.3px;top:354.09999999999997px;width:38.6px;height:12.3px;border-radius:6.2px;background:#0f78e6"></div>
<div class="t" style="left:753.6px;top:357.9px;font-size:6.6px;color:#fff;font-weight:bold;transform:translateX(-50%) scaleX(0.87)">11/26/2021</div>
<div class="a" style="left:550.5px;top:369.5px;width:225.5px;height:18.4px;background:#fbfbfb;border-bottom:0.8px solid #ececec"></div>
<div class="t" style="left:553.8px;top:376.7px;font-size:6.75px;color:#777573">CN1591 - Dock NDA 100621</div>
<div class="t" style="left:728.5px;top:376.7px;font-size:6.5px;color:#6f6d6b;transform:translateX(-100%) scaleX(0.9);transform-origin:100% 0">51 days left</div>
<div class="a" style="left:734.3px;top:372.4px;width:38.6px;height:12.3px;border-radius:6.2px;background:#0f78e6"></div>
<div class="t" style="left:753.6px;top:376.2px;font-size:6.6px;color:#fff;font-weight:bold;transform:translateX(-50%) scaleX(0.87)">11/26/2021</div>
<div class="a" style="left:550.5px;top:387.8px;width:225.5px;height:18.4px;background:#fbfbfb;border-bottom:0.8px solid #ececec"></div>
<div class="t" style="left:553.8px;top:395.0px;font-size:6.75px;color:#777573">CN1534 - Dock NDA</div>
<div class="t" style="left:728.5px;top:395.0px;font-size:6.5px;color:#6f6d6b;transform:translateX(-100%) scaleX(0.9);transform-origin:100% 0">51 days left</div>
<div class="a" style="left:734.3px;top:390.7px;width:38.6px;height:12.3px;border-radius:6.2px;background:#0f78e6"></div>
<div class="t" style="left:753.6px;top:394.5px;font-size:6.6px;color:#fff;font-weight:bold;transform:translateX(-50%) scaleX(0.87)">11/26/2021</div>
<div class="a" style="left:32px;top:407.4px;width:759px;height:4.6px;background:linear-gradient(rgba(0,0,0,0.045),rgba(0,0,0,0.035))"></div>
</body></html>
